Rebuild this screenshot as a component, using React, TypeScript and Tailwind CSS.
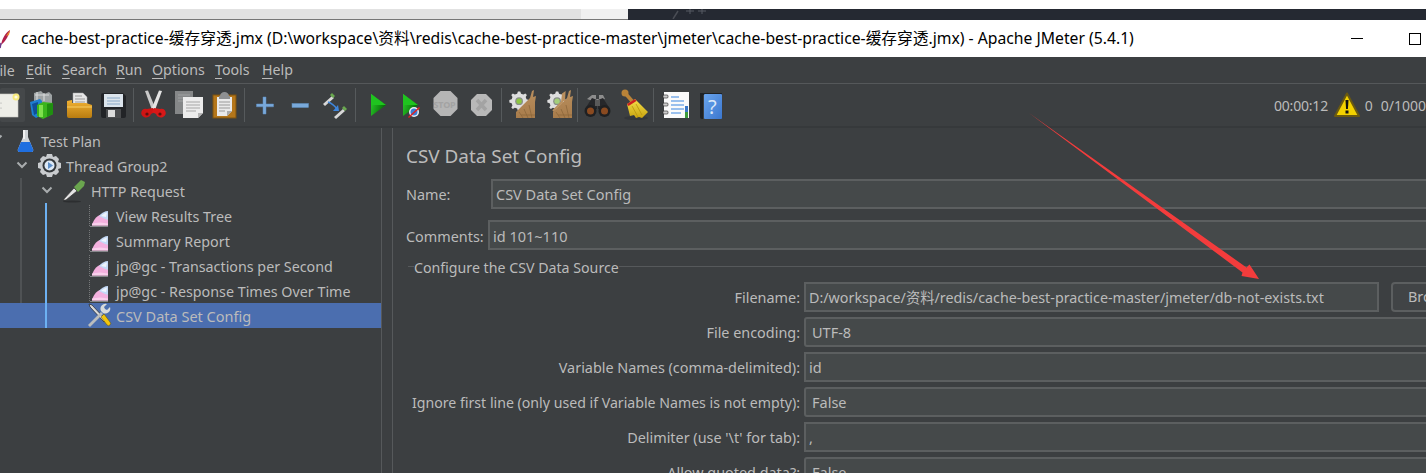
import React from "react";

const FONT = "font-['Noto_Sans','Noto_Sans_CJK_SC',sans-serif]";

function Ico({ children, w = 35, h = 42 }: { children: React.ReactNode; w?: number; h?: number }) {
  return (
    <svg width={w} height={h} viewBox={`0 0 ${w} ${h}`} className="block shrink-0 overflow-visible">
      {children}
    </svg>
  );
}

const Sep = () => (
  <div className="w-[6px] h-[34px] flex justify-center shrink-0">
    <div className="w-px h-full bg-[#565a5c]" />
  </div>
);

function Defs() {
  return (
    <svg width="0" height="0" className="absolute">
      <defs>
        <linearGradient id="gOrange" x1="0" y1="0" x2="0" y2="1">
          <stop offset="0" stopColor="#f2b233" />
          <stop offset="1" stopColor="#b97c10" />
        </linearGradient>
        <linearGradient id="gGreen" x1="0" y1="0" x2="1" y2="0.4">
          <stop offset="0" stopColor="#2ed02e" />
          <stop offset="1" stopColor="#046e04" />
        </linearGradient>
        <linearGradient id="gBroom" x1="0" y1="0" x2="0" y2="1">
          <stop offset="0" stopColor="#f5e04a" />
          <stop offset="1" stopColor="#c9a410" />
        </linearGradient>
        <linearGradient id="gBlue" x1="0" y1="0" x2="1" y2="1">
          <stop offset="0" stopColor="#6aa5ee" />
          <stop offset="1" stopColor="#3b77cf" />
        </linearGradient>
        <linearGradient id="gWood" x1="0" y1="0" x2="0" y2="1">
          <stop offset="0" stopColor="#b98f5e" />
          <stop offset="1" stopColor="#a87c4b" />
        </linearGradient>
      </defs>
    </svg>
  );
}

const IconNew = () => (
  <Ico>
    <rect x="10" y="4" width="25" height="34" rx="2" fill="#45484a" />
    <rect x="6" y="10" width="22" height="23" fill="#eeeee8" stroke="#c9c9c4" strokeWidth="0.6" />
    <circle cx="26" cy="13" r="3.5" fill="#f7ea7c" />
    <circle cx="26" cy="13" r="1.6" fill="#fffbe0" />
    <circle cx="11" cy="19" r="0.6" fill="#999" />
    <circle cx="11" cy="24" r="0.6" fill="#999" />
  </Ico>
);
const IconTemplates = () => (
  <Ico>
    <path d="M9 9l7-2 3 3 5-2 3 3v8H9z" fill="#9ea3a4" />
    <path d="M10 11h14M12 8v8M19 9v8" stroke="#d5d8d8" strokeWidth="1.2" />
    <path d="M5 18l10-3 2 2v14l-6 3-4-3z" fill="#1e7fd0" />
    <path d="M7 20l6-2v11l-4 2z" fill="#114f96" />
    <path d="M12 21l6-3 10 1v11l-10 5-6-3z" fill="#3ab51d" />
    <path d="M14 21h4v12h-4z" fill="#7fe04e" />
    <path d="M22 20l6-1v11l-6 3z" fill="#1f8f10" />
  </Ico>
);
const IconOpen = () => (
  <Ico>
    <path d="M13 9h10l4 4v10H13z" fill="#e6e6e6" stroke="#aaa" strokeWidth="0.5" />
    <path d="M15 12h7M15 15h10M15 18h10" stroke="#9a9a9a" strokeWidth="1" />
    <path d="M7 17l5-1v3h14l6 2v11a2 2 0 0 1-2 2H9a2 2 0 0 1-2-2z" fill="url(#gOrange)" />
    <path d="M7 23h25" stroke="#f8cd62" strokeWidth="1" />
  </Ico>
);
const IconSave = () => (
  <Ico>
    <path d="M6 11a2 2 0 0 1 2-2h20l3 3v20a2 2 0 0 1-2 2H8a2 2 0 0 1-2-2z" fill="#222427" />
    <rect x="9" y="10" width="19" height="13" fill="#dbe4ec" />
    <path d="M12 14h13M12 17h13M12 20h13" stroke="#8aa8c6" strokeWidth="1" />
    <rect x="11" y="25" width="15" height="9" fill="#4a4c4e" />
    <rect x="13" y="26" width="7" height="7" fill="#dcdcdc" />
  </Ico>
);
const IconCut = () => (
  <Ico>
    <path d="M9 7l3-0.5 7 17-3 2.500z" fill="#c9c9c9" />
    <path d="M26 7l-3-0.5-7 17 3 2.500z" fill="#e4e4e4" />
    <path d="M8 33a4 4 0 0 1 3-8l6-1 2 4-4 2a5 5 0 0 1-7 3z" fill="#cf1414" />
    <path d="M27 33a4 4 0 0 0-3-8l-6-1-2 4 4 2a5 5 0 0 0 7 3z" fill="#d81818" />
    <circle cx="11" cy="30" r="1.6" fill="#5c1010" />
    <circle cx="24" cy="30" r="1.6" fill="#5c1010" />
  </Ico>
);
const IconCopy = () => (
  <Ico>
    <rect x="4" y="7" width="18" height="23" fill="#858788" />
    <path d="M7 11h12M7 14h12M7 17h5" stroke="#a0a2a3" strokeWidth="1" />
    <path d="M12 13h20v16l-5 5H12z" fill="#ececec" />
    <path d="M27 34v-5h5z" fill="#b5b5b5" />
    <path d="M15 18h14M15 21h14M15 24h14M15 27h10" stroke="#a6a6a6" strokeWidth="1" />
  </Ico>
);
const IconPaste = () => (
  <Ico>
    <rect x="7" y="11" width="23" height="23" fill="#b4761a" stroke="#7c5310" strokeWidth="1" />
    <path d="M11 13h15v14l-5 5H11z" fill="#e9e9e9" />
    <path d="M21 32v-5h5z" fill="#aaa" />
    <path d="M13 18h11M13 21h11M13 24h11M13 27h6" stroke="#999" strokeWidth="1" />
    <path d="M14 12a4.500 4 0 0 1 9 0h1v3H13v-3z" fill="#8e9092" />
  </Ico>
);
const IconPlus = () => (
  <Ico>
    <path d="M16 13h3v7h7.500v2.800H19V30h-3v-7.200H9.500V20H16z" fill="#79a9da" stroke="#5f8fc0" strokeWidth="0.5" />
  </Ico>
);
const IconMinus = () => (
  <Ico>
    <rect x="10" y="19.500" width="16.500" height="4" fill="#79a9da" stroke="#5f8fc0" strokeWidth="0.5" />
  </Ico>
);
const IconToggle = () => (
  <Ico>
    <path d="M6 20l9-8 2 2-9 8z" fill="#d8d8d8" />
    <path d="M13 11l2-2 3 3-2 2z" fill="#69a84f" />
    <path d="M17 33l9-8 2 2-9 8z" fill="#d8d8d8" />
    <path d="M25 24l2-2 3 3-2 2z" fill="#69a84f" />
    <path d="M11 18c3 1 6 3 9 7" stroke="#3f86dc" strokeWidth="1.600" fill="none" />
    <path d="M16 27l6 0-1-6z" fill="#3f86dc" />
  </Ico>
);
const IconStart = () => (
  <Ico>
    <path d="M13 10l15 11-15 11z" fill="url(#gGreen)" />
    <path d="M13 10l15 11H13z" fill="#1fc41f" />
  </Ico>
);
const IconNoPause = () => (
  <Ico>
    <path d="M10 10l15 11-15 11z" fill="url(#gGreen)" />
    <path d="M10 10l15 11H10z" fill="#1fc41f" />
    <circle cx="21" cy="28" r="5" fill="#e9eef5" />
    <circle cx="21" cy="28" r="3.500" fill="#3a7fd5" />
    <path d="M15.500 33.500l11-10" stroke="#e02020" strokeWidth="1.500" />
  </Ico>
);
const IconStop = () => (
  <div className="relative w-[35px] h-[42px] shrink-0">
    <Ico>
      <path d="M13 7h10l7 7v11l-7 7H13l-7-7V14z" fill="#b5b5b5" transform="translate(-0.500 0)" />
    </Ico>
    <span className="absolute inset-0 flex items-center justify-center text-[9px] font-bold leading-none tracking-tight text-[#a3a3a3] -translate-x-px -translate-y-px">STOP</span>
  </div>
);
const IconShutdown = () => (
  <Ico>
    <path d="M14 10h9l6 6v10l-6 6h-9l-6-6V16z" fill="#b8b8b8" />
    <path d="M14 16l9 10M23 16l-9 10" stroke="#a3a3a3" strokeWidth="3.500" />
  </Ico>
);
const Gear = ({ dot }: { dot: string }) => (
  <g>
    <path d="M14 7l3 0 1 3 3 1 2.500-1.500 2 2L24 14l1 3 3 1v3l-3 1-1 3 1.500 2.500-2 2L21 28l-3 1-1 3h-3l-1-3-3-1-2.500 1.500-2-2L7 25l-1-3-3-1v-3l3-1 1-3-1.500-2.500 2-2L10 11l3-1z" fill="#dedede" />
    <circle cx="15.500" cy="19.500" r="5" fill="#8a8f8a" />
    <circle cx="15.500" cy="19.500" r="3.400" fill={dot} />
  </g>
);
const Brush = () => (
  <g>
    <path d="M12 28l14-14 2-7 2-1-1 7 3-1-1 6 0 16-19 0z" fill="url(#gWood)" />
    <path d="M15 28l4 6M20 25l4 9M25 21l3 13M17 31h14" stroke="#8d673b" strokeWidth="0.800" />
  </g>
);
const IconClear = () => (
  <Ico>
    <g transform="translate(3 2) scale(0.78)">
      <Gear dot="#8cc63f" />
    </g>
    <Brush />
  </Ico>
);
const IconClearAll = () => (
  <Ico>
    <g transform="translate(6 2) scale(0.78)">
      <Gear dot="#a4cf7a" />
    </g>
    <g transform="translate(2 0)">
      <Brush />
      <path d="M12 27l9-9 1-8 1.500-1-.5 8" stroke="#b98f5e" fill="none" strokeWidth="2" />
    </g>
  </Ico>
);
const IconSearch = () => (
  <Ico>
    <path d="M12 11h4v4h3v-4h4l2 4-6 2h-6l-6-2z" fill="#8d8d8d" />
    <path d="M12 14L5 25h12V16zM23 14l7 11H18V16z" fill="#26272a" />
    <rect x="15" y="16" width="5" height="6" fill="#5a5a5a" />
    <circle cx="10.500" cy="27" r="6" fill="#1f2022" />
    <circle cx="24.500" cy="27" r="6" fill="#1f2022" />
    <circle cx="10.500" cy="27" r="3.500" fill="#8a4a20" />
    <circle cx="24.500" cy="27" r="3.500" fill="#8a4a20" />
  </Ico>
);
const IconReset = () => (
  <Ico>
    <ellipse cx="21" cy="34" rx="12" ry="2" fill="#33363a" />
    <circle cx="10" cy="9" r="3.500" fill="#b98338" />
    <path d="M10 9l7 8" stroke="#b98338" strokeWidth="3.500" />
    <path d="M12 20l8-5 13 13-3 3-3 3-3-1-3 1-2-3-4 1z" fill="url(#gBroom)" />
    <path d="M12 20l8-5 1.500 2-8 5z" fill="#cc2020" />
    <path d="M17 22l6 11M21 20l6 11" stroke="#b8930e" strokeWidth="0.800" />
  </Ico>
);
const IconFunction = () => (
  <Ico>
    <rect x="8" y="8" width="25" height="26" fill="#fafafa" />
    <rect x="29" y="22" width="3" height="6" fill="#3a78c8" />
    <rect x="29" y="28" width="3" height="6" fill="#3c9a3c" />
    <path d="M15 13h8M15 17h13M15 21h13M15 25h13M15 29h10" stroke="#3a86e0" strokeWidth="1.200" />
    <rect x="7" y="11" width="5" height="3" rx="1" fill="#cfcfcf" stroke="#222" strokeWidth="0.600" />
    <rect x="7" y="19" width="5" height="3" rx="1" fill="#cfcfcf" stroke="#222" strokeWidth="0.600" />
    <rect x="7" y="27" width="5" height="3" rx="1" fill="#cfcfcf" stroke="#222" strokeWidth="0.600" />
  </Ico>
);
const IconHelp = () => (
  <div className="relative w-[35px] h-[42px] shrink-0">
    <Ico>
      <path d="M9 9h22v2H12v24H11a2 2 0 0 1-2-2z" fill="#1e2226" />
      <rect x="13" y="10" width="18" height="25" rx="1" fill="url(#gBlue)" />
    </Ico>
    <span className="absolute left-[17px] top-[11px] text-[20px] leading-[24px] text-[#dbe8f8]">?</span>
  </div>
);
const IconWarn = () => (
  <Ico w={26} h={26}>
    <path d="M13 1.500L25 24H1z" fill="#f3d200" stroke="#6b5a10" strokeWidth="2" strokeLinejoin="round" />
    <path d="M11.500 8h3l-.6 9h-1.800z" fill="#111" />
    <rect x="11.500" y="18.500" width="3" height="3" fill="#111" />
  </Ico>
);

const Listener = () => (
  <Ico w={23} h={25}>
    <path d="M0.500 2v21" stroke="#77797a" strokeWidth="1" strokeDasharray="1 1" />
    <path d="M1 23.500h18" stroke="#85878a" strokeWidth="1" />
    <path d="M3 22.500C4 17 8 13 11 12L19 16.500V22.500z" fill="#f3b0de" />
    <path d="M3 22.500h16v-2l-8-1-8 1z" fill="#f9d0ec" />
    <path d="M10 13C12 10 16 8 19 8V17L15 15.500z" fill="#c4daf7" />
    <path d="M12 13C14 11 16 10 18 9.500L17 14z" fill="#eef5fd" />
  </Ico>
);
const Flask = () => (
  <Ico w={20} h={25}>
    <path d="M6 2h5v7l5 12a2 2 0 0 1-2 3H3a2 2 0 0 1-2-3l5-12z" fill="#cfd3d6" />
    <path d="M4 14h9l3 7a2 2 0 0 1-2 3H3a2 2 0 0 1-2-3z" fill="#1f6fe0" />
    <rect x="6" y="2" width="2" height="9" fill="#f2f2f2" />
  </Ico>
);
const ThreadGear = () => (
  <Ico w={25} h={25}>
    <path d="M10 1h5l1 3 3-1 3 3-1 3 3 1v5l-3 1 1 3-3 3-3-1-1 3h-5l-1-3-3 1-3-3 1-3-3-1v-5l3-1-1-3 3-3 3 1z" fill="#c9cccf" />
    <circle cx="12.500" cy="12.500" r="7" fill="#33373a" />
    <circle cx="12.500" cy="12.500" r="5" fill="#dce8f5" />
    <path d="M11 9l5 3.500-5 3.500z" fill="#5d8fc8" />
  </Ico>
);
const Dropper = () => (
  <Ico w={25} h={25}>
    <ellipse cx="10" cy="23.500" rx="9" ry="1" fill="#2c2e30" />
    <path d="M1 22l11-12 3 3L4 22z" fill="#e4e4e4" stroke="#333" strokeWidth="0.700" />
    <path d="M12 9l7-7 4 2-1 4-6 6z" fill="#6aa54e" />
  </Ico>
);
const Tools = () => (
  <Ico w={24} h={25}>
    <path d="M2 1l3 1 14 15-2 2L3 4z" fill="#d8d8d8" stroke="#222" strokeWidth="0.700" />
    <path d="M14 14l3-3 6 8a2 2 0 0 1-3 3z" fill="#f1c40f" stroke="#5c4a08" strokeWidth="0.500" />
    <path d="M1 22l13-13 2 2L3 24z" fill="#bbbdbe" />
    <path d="M14 8a5 5 0 0 1 6-7l-3 3 1 2 2 1 3-3a5 5 0 0 1-7 6z" fill="#d8dadb" />
  </Ico>
);
const Chevron = () => (
  <svg width="12" height="8" viewBox="0 0 12 8" className="block">
    <path d="M1.500 1.500L6 6l4.500-4.500" stroke="#a9acae" strokeWidth="2" fill="none" />
  </svg>
);

function TreeRow({ pl, icon, label, selected, chev }: { pl: string; icon: React.ReactNode; label: string; selected?: boolean; chev?: React.ReactNode }) {
  return (
    <div className={`h-[25px] flex items-center ${pl} ${selected ? "bg-[#4b6eaf]" : ""}`}>
      {chev}
      {icon}
      <span className={`ml-[4px] whitespace-nowrap ${selected ? "text-[14.5px]" : "text-[14.3px]"} leading-[25px] text-[#bbbbbb] translate-y-px`}>{label}</span>
    </div>
  );
}

function Field({ value, pad = "pl-[3px]", round, className = "", size = "text-[14.5px]", shift = "translate-y-px" }: { value: string; pad?: string; round?: boolean; className?: string; size?: string; shift?: string }) {
  return (
    <div className={`h-[30px] border-2 border-[#5c5f60] bg-[#45494a] flex items-center ${pad} ${round ? "rounded-[3px]" : ""} ${className}`}>
      <span className={`${size} ${shift} text-[#bbbbbb] whitespace-nowrap`}>{value}</span>
    </div>
  );
}

function FormRow({ label, children, size = "text-[14.4px]" }: { label: string; children: React.ReactNode; size?: string }) {
  return (
    <div className="h-[30px] flex items-center mb-[5px]">
      <div className={`w-[407px] shrink-0 text-right ${size} text-[#bbbbbb] whitespace-nowrap translate-y-px`}>{label}</div>
      <div className="w-[4px] shrink-0" />
      {children}
    </div>
  );
}

const Menu = ({ k, rest, w }: { k: string; rest: string; w: string }) => (
  <span className={`${w} shrink-0 text-[14.2px] text-[#bbbbbb] whitespace-nowrap`}>
    <span className="underline underline-offset-[3px]">{k}</span>
    {rest}
  </span>
);

export default function App() {
  return (
    <div className={`relative w-[1426px] h-[473px] overflow-hidden bg-[#3c3f41] flex flex-col ${FONT}`}>
      <Defs />
      {/* strip above the window */}
      <div className="h-[9px] bg-white shrink-0" />
      <div className="h-[11px] flex shrink-0">
        <div className="w-[581px] bg-[#e2e2e2] border-b border-[#777777]" />
        <div className="w-[47px] bg-[#f0f0f0] border-b border-[#777777]" />
        <div className="flex-1 bg-[#252932] relative">
          <svg width="90" height="10" viewBox="0 0 90 10" className="block ml-[44px]">
            <path d="M6 2L1 10" stroke="#4a4d55" strokeWidth="1.500" />
            <path d="M14 2h8M18 0v5M26 2h8M30 0v5" stroke="#565a62" strokeWidth="1" />
          </svg>
        </div>
      </div>
      {/* title bar */}
      <div className="h-[37px] bg-white flex items-center shrink-0">
        <svg width="21" height="20" viewBox="0 0 21 20" className="shrink-0">
          <path d="M1 16C2 10 5 4 10 1 9 6 6 12 2 15z" fill="#b0204a" />
          <path d="M6 7l4-6-1 5z" fill="#e8892c" />
          <path d="M1 14l-1 5" stroke="#6a3a8a" strokeWidth="1.500" />
        </svg>
        <span className="text-[15.72px] text-black whitespace-nowrap flex-1">
          cache-best-practice-缓存穿透.jmx (D:\workspace\资料\redis\cache-best-practice-master\jmeter\cache-best-practice-缓存穿透.jmx) - Apache JMeter (5.4.1)
        </span>
        <div className="w-[12px] h-px bg-black mr-[46px]" />
        <div className="w-[12px] h-[12px] border border-black mr-[5px]" />
      </div>
      {/* menu */}
      <div className="h-[27px] flex items-center border-b border-[#55585a] shrink-0 pb-[1px]">
        <div className="w-[26px] shrink-0">
          <Menu k="F" rest="ile" w="-ml-[8px] inline-block" />
        </div>
        <Menu k="E" rest="dit" w="w-[36px]" />
        <Menu k="S" rest="earch" w="w-[54px]" />
        <Menu k="R" rest="un" w="w-[36px]" />
        <Menu k="O" rest="ptions" w="w-[63px]" />
        <Menu k="T" rest="ools" w="w-[47px]" />
        <Menu k="H" rest="elp" w="w-[40px]" />
      </div>
      {/* toolbar */}
      <div className="h-[44px] flex items-center shrink-0 border-b-2 border-[#36393b]">
        <div className="flex items-center -ml-[10px]">
          <IconNew />
          <IconTemplates />
          <IconOpen />
          <IconSave />
          <Sep />
          <IconCut />
          <IconCopy />
          <IconPaste />
          <Sep />
          <IconPlus />
          <IconMinus />
          <IconToggle />
          <Sep />
          <IconStart />
          <IconNoPause />
          <IconStop />
          <IconShutdown />
          <Sep />
          <IconClear />
          <IconClearAll />
          <Sep />
          <IconSearch />
          <IconReset />
          <Sep />
          <IconFunction />
          <IconHelp />
        </div>
        <div className="ml-auto w-[152px] flex items-center text-[14px] text-[#bbbbbb] whitespace-nowrap">
          <span className="w-[64px] tracking-[-0.2px]">00:00:12</span>
          <IconWarn />
          <span className="ml-[5px] w-[17px]">0</span>
          <span>0/1000</span>
        </div>
      </div>
      {/* main */}
      <div className="flex-1 flex min-h-0">
        {/* tree */}
        <div className="relative w-[381px] shrink-0 h-[200px]">
          <div className="absolute left-[20px] top-[50px] w-[2px] h-[150px] bg-[#4f5254]" />
          <div className="absolute left-[45px] top-[75px] w-[2px] h-[125px] bg-[#6db1f2] z-10" />
          <TreeRow pl="pl-[17px]" icon={<Flask />} label="Test Plan" chev={<div className="absolute -left-[9px] top-[6px]"><Chevron /></div>} />
          <TreeRow pl="pl-[37px]" icon={<ThreadGear />} label="Thread Group2" chev={<div className="absolute left-[16px] top-[33px]"><Chevron /></div>} />
          <TreeRow pl="pl-[62px]" icon={<Dropper />} label="HTTP Request" chev={<div className="absolute left-[41px] top-[58px]"><Chevron /></div>} />
          <TreeRow pl="pl-[89px]" icon={<Listener />} label="View Results Tree" />
          <TreeRow pl="pl-[89px]" icon={<Listener />} label="Summary Report" />
          <TreeRow pl="pl-[89px]" icon={<Listener />} label="jp@gc - Transactions per Second" />
          <TreeRow pl="pl-[89px]" icon={<Listener />} label="jp@gc - Response Times Over Time" />
          <TreeRow pl="pl-[87px] relative" icon={<span className="mr-[1px]"><Tools /></span>} label="CSV Data Set Config" selected />
        </div>
        {/* splitter */}
        <div className="w-[12px] shrink-0 border-x border-[#56595b]" />
        {/* form */}
        <div className="flex-1 min-w-0 overflow-hidden pt-[14px]">
          <div className="pl-[13px] h-[28px] flex items-center text-[18.9px] text-[#bbbbbb] whitespace-nowrap mb-[9px]">CSV Data Set Config</div>
          <div className="pl-[13px] flex items-center h-[30px] mb-[11px]">
            <span className="w-[85px] shrink-0 text-[14.4px] text-[#bbbbbb] translate-y-px">Name:</span>
            <Field value="CSV Data Set Config" className="flex-1 -mr-[10px]" />
          </div>
          <div className="pl-[13px] flex items-center h-[30px]">
            <span className="w-[82px] shrink-0 text-[14.4px] text-[#bbbbbb] translate-y-[2px]">Comments:</span>
            <Field value="id 101~110" shift="translate-y-[2px]" className="flex-1 -mr-[10px]" />
          </div>
          <div className="h-[20px] mt-[8px] mb-[4px] flex items-start pl-[15px]">
            <div className="w-[6px] h-px bg-[#56595b] mt-[8px]" />
            <span className="text-[14.2px] text-[#bbbbbb] whitespace-nowrap leading-[20px]">Configure the CSV Data Source</span>
            <div className="flex-1 h-px bg-[#56595b] mt-[8px]" />
          </div>
          <FormRow label="Filename:">
            <Field value="D:/workspace/资料/redis/cache-best-practice-master/jmeter/db-not-exists.txt" size="text-[14.3px]" className="w-[575px] shrink-0" />
            <div className="ml-[12px] w-[100px] h-[30px] shrink-0 border-2 border-[#5c5f60] rounded-[4px] bg-[#414446] flex items-center pl-[15px] text-[14.4px] text-[#bbbbbb]">Browse...</div>
          </FormRow>
          <FormRow label="File encoding:">
            <Field value="UTF-8" pad="pl-[6px]" round className="flex-1 -mr-[10px]" />
          </FormRow>
          <FormRow label="Variable Names (comma-delimited):">
            <Field value="id" className="flex-1 -mr-[10px]" />
          </FormRow>
          <FormRow label="Ignore first line (only used if Variable Names is not empty):" size="text-[14.15px]">
            <Field value="False" pad="pl-[6px]" round className="flex-1 -mr-[10px]" />
          </FormRow>
          <FormRow label="Delimiter (use '\t' for tab):">
            <Field value="," className="flex-1 -mr-[10px]" />
          </FormRow>
          <FormRow label="Allow quoted data?:">
            <Field value="False" pad="pl-[6px]" round className="flex-1 -mr-[10px]" />
          </FormRow>
        </div>
      </div>
      {/* annotation arrow */}
      <svg width="1426" height="473" viewBox="0 0 1426 473" className="absolute inset-0 pointer-events-none z-20">
        <path d="M1029 113L1246.500 267.500 1249.500 264.500 1259 279 1241.500 276 1242.500 272.500z" fill="#f33c3c" />
      </svg>
    </div>
  );
}
